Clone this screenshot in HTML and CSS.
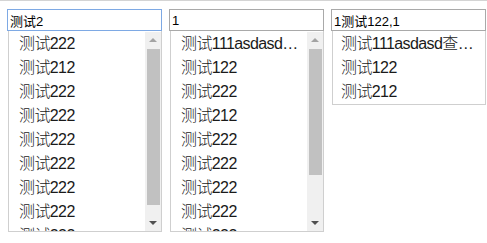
FILE: index.html
```html
<!DOCTYPE html>
<html lang="zh-CN">
<head>
    <meta charset="UTF-8">
    <title>Autocomplete</title>
    <link rel="stylesheet" href="styles.css">
</head>
<body>

<div class="row">
    <!-- focused box, long list -->
    <div class="combo focused">
        <input type="text" value="测试2" />
        <div class="list">
            <div class="items">
                <div class="item">测试222</div>
                <div class="item">测试212</div>
                <div class="item">测试222</div>
                <div class="item">测试222</div>
                <div class="item">测试222</div>
                <div class="item">测试222</div>
                <div class="item">测试222</div>
                <div class="item">测试222</div>
                <div class="item">测试222</div>
            </div>
            <div class="scrollbar">
                <div class="arrow up"></div>
                <div class="thumb thumb-long"></div>
                <div class="track"></div>
                <div class="arrow down"></div>
            </div>
        </div>
    </div>

    <div class="combo">
        <input type="text" value="1" />
        <div class="list">
            <div class="items">
                <div class="item">测试111asdasd查询结果</div>
                <div class="item">测试122</div>
                <div class="item">测试222</div>
                <div class="item">测试212</div>
                <div class="item">测试222</div>
                <div class="item">测试222</div>
                <div class="item">测试222</div>
                <div class="item">测试222</div>
                <div class="item">测试222</div>
            </div>
            <div class="scrollbar">
                <div class="arrow up"></div>
                <div class="thumb thumb-short"></div>
                <div class="track"></div>
                <div class="arrow down"></div>
            </div>
        </div>
    </div>

    <div class="combo">
        <input type="text" value="1测试122,1" />
        <div class="list short">
            <div class="items">
                <div class="item">测试111asdasd查询结果</div>
                <div class="item">测试122</div>
                <div class="item">测试212</div>
            </div>
        </div>
    </div>
</div>

</body>
</html>
```

FILE: styles.css
```css
body {
    margin: 0;
    border-top: 1px solid #d4d4d4;
    background-color: #fff;
    color: #000;
    font-family: "Liberation Sans", "Noto Sans CJK SC", sans-serif;
}
.row {
    display: flex;
    align-items: flex-start;
    gap: 7px;
    padding: 8px 0 0 7px;
}
.combo {
    width: 155px;
    display: flex;
    flex-direction: column;
}
.combo input {
    box-sizing: border-box;
    width: 100%;
    height: 22px;
    margin: 0;
    padding: 0 2px;
    border: 1px solid #a9a9a9;
    font-family: "Liberation Sans", "Noto Sans CJK SC", sans-serif;
    font-size: 13px;
    color: #000;
    outline: none;
}
.focused input {
    border-color: #7ea9e4;
}
.list {
    display: flex;
    height: 201px;
    box-sizing: border-box;
    margin-left: 1px;
    border: 1px solid #cfcfcf;
    border-top: none;
    padding-top: 1px;
    overflow: hidden;
}
.list.short {
    height: auto;
}
.items {
    flex: 1;
    min-width: 0;
    overflow: hidden;
}
.item {
    height: 24px;
    line-height: 23px;
    padding: 0 4px 0 10px;
    font-size: 16px;
    font-weight: 300;
    letter-spacing: -0.6px;
    color: #1a1a1a;
    white-space: nowrap;
    overflow: hidden;
    text-overflow: ellipsis;
}
.short .item {
    padding-left: 8px;
    padding-right: 10px;
}
.scrollbar {
    width: 16px;
    flex: none;
    display: flex;
    flex-direction: column;
    background-color: #f0f0f0;
}
.arrow {
    height: 16px;
    flex: none;
    display: flex;
    align-items: center;
    justify-content: center;
}
.arrow::before {
    content: "";
    width: 0;
    height: 0;
    border-left: 4px solid transparent;
    border-right: 4px solid transparent;
}
.up::before {
    border-bottom: 4px solid #a3a3a3;
}
.down::before {
    border-top: 4px solid #505050;
}
.thumb {
    flex: none;
    margin: 1px 1px 0 2px;
    background-color: #c1c1c1;
}
.thumb-long {
    height: 156px;
}
.thumb-short {
    height: 126px;
}
.track {
    flex: 1;
}
```
